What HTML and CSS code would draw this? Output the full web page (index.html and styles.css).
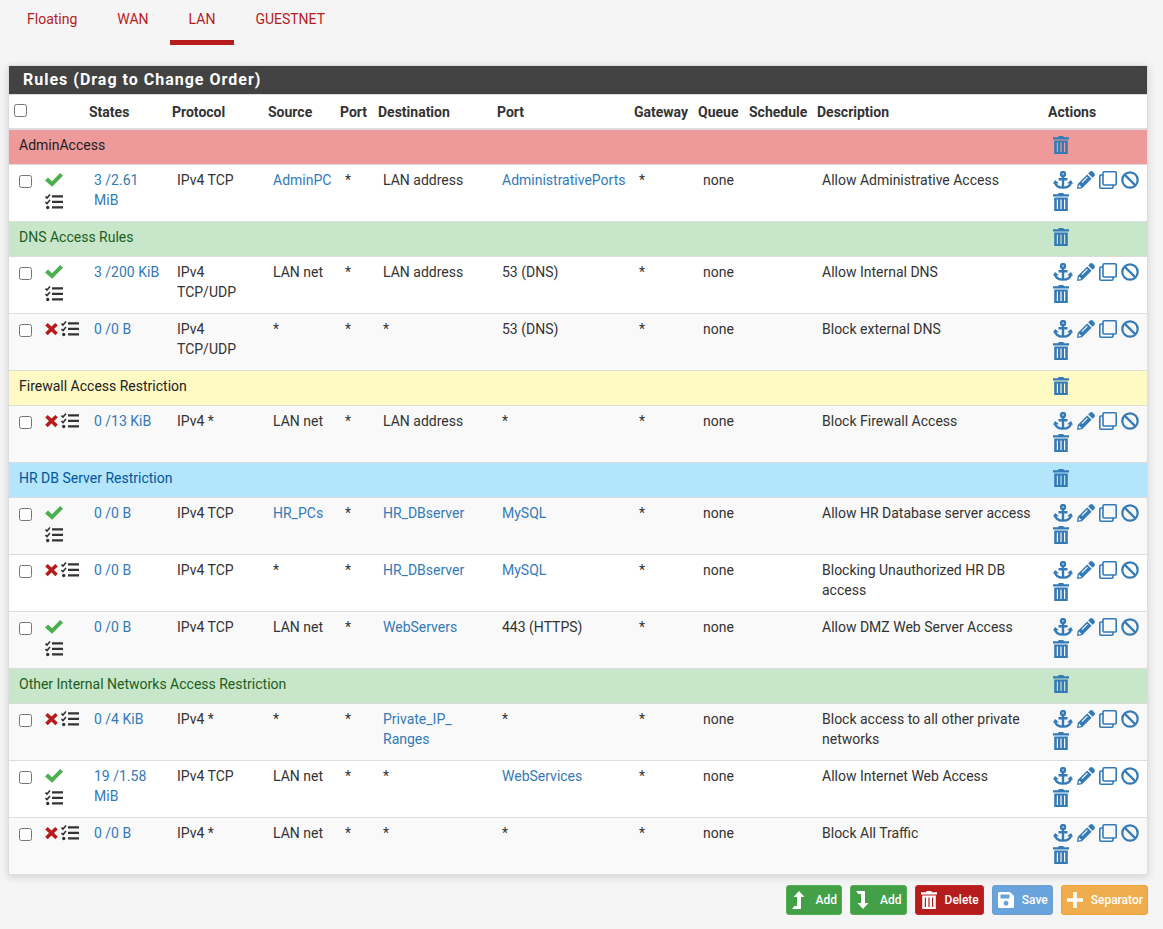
FILE: index.html
```html
<!DOCTYPE html>
<html lang="en">
<head>
  <meta charset="UTF-8">
  <title>Firewall Rules</title>
  <link rel="stylesheet" href="styles.css">
</head>
<body>
  <svg class="sprite" aria-hidden="true">
    <symbol id="check" viewBox="0 0 18 18"><path d="M0 9.500 3 6.600l4 3.700L15.200 2 18 4.800 7.100 15.800z"/></symbol>
    <symbol id="times" viewBox="0 0 14 18"><path d="M.2 5.400 2.700 2.900 6.500 6.600 10.300 2.900 12.800 5.400 9 9.100 12.800 12.800 10.300 15.300 6.500 11.600 2.700 15.300.2 12.800 4 9.100z"/></symbol>
    <symbol id="tasks" viewBox="0 0 18 18"><path d="M7 2.200h11v2.400H7zM7 7.700h11v2.400H7zM7 13.200h11v2.400H7z"/><path d="M.5 3.500 2 5l3-3.500M.5 9 2 10.500 5 7" fill="none" stroke="currentColor" stroke-width="1.600"/><circle cx="2.700" cy="14.500" r="1.700"/></symbol>
    <symbol id="anchor" viewBox="0 0 20 18"><g fill="none" stroke="currentColor" stroke-width="2.400"><circle cx="10" cy="3" r="2"/><path d="M10 5v11.500M5.500 8.300h9M2 10.800c.5 4 3.500 5.800 8 5.800s7.500-1.800 8-5.800"/></g><path d="M0 12.800 2 9l4 3.200zM20 12.800 18 9l-4 3.200z"/></symbol>
    <symbol id="pencil" viewBox="0 0 18 18"><path fill-rule="evenodd" d="m10.200 3.400 4.400 4.400L5 17.300l-5 .7.700-5zM2 13.500l-.5 3 3-.5zM4.500 11.300l.8.800 5.500-5.500-.8-.8zM11.200 2.400 13 .6c.8-.8 1.800-.8 2.600 0l1.800 1.800c.8.8.8 1.800 0 2.600l-1.800 1.800z"/></symbol>
    <symbol id="clone" viewBox="0 0 18 18"><g fill="none" stroke="currentColor" stroke-width="1.600"><rect x="4" y=".8" width="13.200" height="13.200" rx="1"/><path d="M4 4H1.800a1 1 0 0 0-1 1v11.200a1 1 0 0 0 1 1H13a1 1 0 0 0 1-1V14"/></g></symbol>
    <symbol id="ban" viewBox="0 0 18 18"><g fill="none" stroke="currentColor" stroke-width="2.200"><circle cx="9" cy="9" r="7.700"/><path d="m3.600 3.600 10.800 10.800"/></g></symbol>
    <symbol id="trash" viewBox="0 0 16 18"><path fill-rule="evenodd" d="M0 1.200h5L5.800 0h4.400l.8 1.200h5v2.200H0zM1.200 4.500h13.600V18H1.200zM3.800 6.500v9.500h1.200V6.500zM7.400 6.500v9.500h1.200V6.500zM11 6.500v9.500h1.200V6.500z"/></symbol>
    <symbol id="up" viewBox="-1 0 18 18"><path d="M0 18h9V6h3.500L7 0 1.500 6H5v9H2.400z"/></symbol>
    <symbol id="down" viewBox="-1 0 18 18"><path d="M0 0h9v12h3.500L7 18l-5.500-6H5V3H2.400z"/></symbol>
    <symbol id="save" viewBox="0 0 18 18"><path fill-rule="evenodd" d="M2.500 1H13l4 4v10.500a1.500 1.500 0 0 1-1.500 1.500h-13A1.500 1.500 0 0 1 1 15.500v-13A1.500 1.500 0 0 1 2.500 1zM3.500 3.500v4h9v-4zM9 9.800a2.400 2.400 0 1 0 .01 0z"/></symbol>
    <symbol id="plus" viewBox="0 0 18 18"><path d="M7.200 1h3.600v6.200H17v3.600h-6.200V17H7.200v-6.200H1V7.200h6.200z"/></symbol>
  </svg>

  <ul class="nav-pills">
    <li><a href="#">Floating</a></li>
    <li><a href="#">WAN</a></li>
    <li class="active"><a href="#">LAN</a></li>
    <li><a href="#">GUESTNET</a></li>
  </ul>

  <form>
    <div class="panel">
      <h2 class="panel-title">Rules (Drag to Change Order)</h2>
      <table id="ruletable">
        <colgroup>
          <col class="col-check"><col class="col-icons"><col class="col-states"><col class="col-proto"><col class="col-source"><col class="col-sport"><col class="col-dest"><col class="col-dport"><col class="col-gateway"><col class="col-queue"><col class="col-sched"><col><col class="col-actions">
        </colgroup>
        <thead>
          <tr>
            <th><input type="checkbox" aria-label="Select all"></th>
            <th></th>
            <th>States</th>
            <th>Protocol</th>
            <th>Source</th>
            <th>Port</th>
            <th>Destination</th>
            <th>Port</th>
            <th>Gateway</th>
            <th>Queue</th>
            <th>Schedule</th>
            <th>Description</th>
            <th>Actions</th>
          </tr>
        </thead>
        <tbody id="rules"></tbody>
      </table>
    </div>

    <nav class="action-buttons">
      <button type="button" class="btn btn-success"><svg class="icon"><use href="#up"/></svg>Add</button>
      <button type="button" class="btn btn-success"><svg class="icon"><use href="#down"/></svg>Add</button>
      <button type="button" class="btn btn-danger"><svg class="icon"><use href="#trash"/></svg>Delete</button>
      <button type="button" class="btn btn-primary"><svg class="icon"><use href="#save"/></svg>Save</button>
      <button type="button" class="btn btn-warning"><svg class="icon"><use href="#plus"/></svg>Separator</button>
    </nav>
  </form>

  <script src="rules.js"></script>
</body>
</html>
```
FILE: styles.css
```css
* {
    box-sizing: border-box;
}

body {
    margin: 0;
    padding: 0 15px 14px 8px;
    background-color: #f5f5f5;
    color: #333;
    font-family: Roboto, "Liberation Sans", sans-serif;
    font-size: 14px;
    line-height: 20px;
}

a {
    color: #337ab7;
    text-decoration: none;
}

.sprite {
    display: none;
}

.icon {
    display: block;
    width: 18px;
    height: 18px;
    fill: currentColor;
}

/* tabs */
.nav-pills {
    display: flex;
    gap: 2px;
    margin: 0 0 20px;
    padding: 0;
    list-style: none;
}

.nav-pills a {
    display: block;
    height: 45px;
    padding: 9px 19px;
    border-bottom: 5px solid transparent;
    color: #b71c1c;
}

.nav-pills .active a {
    border-bottom-color: #b71c1c;
}

/* rules panel */
.panel {
    border: 1px solid #ddd;
    background-color: #fff;
    box-shadow: 0 2px 8px rgba(0, 0, 0, 0.15);
}

.panel-title {
    margin: 0;
    padding: 4px 14px;
    background-color: #424242;
    color: #fff;
    font-size: 16px;
    font-weight: 700;
    letter-spacing: 1px;
}

table {
    width: 100%;
    table-layout: fixed;
    border-spacing: 0;
}

.col-check { width: 26px; }
.col-icons { width: 49px; }
.col-states { width: 83px; }
.col-proto { width: 96px; }
.col-source { width: 72px; }
.col-sport { width: 38px; }
.col-dest { width: 119px; }
.col-dport { width: 137px; }
.col-gateway { width: 64px; }
.col-queue { width: 51px; }
.col-sched { width: 68px; }
.col-actions { width: 104px; }

th {
    height: 36px;
    padding: 7px 5px 5px;
    border-top: 1px solid #ddd;
    border-bottom: 2px solid #ddd;
    font-weight: 700;
    text-align: left;
    vertical-align: top;
}

td {
    height: 57px;
    padding: 5px 5px 5px 10px;
    border-top: 1px solid #ddd;
    vertical-align: top;
}

tbody tr:nth-of-type(odd) {
    background-color: #f9f9f9;
}

.separator td {
    height: 35px;
}

tbody tr:first-child td {
    height: 34px;
    border-top: 0;
}

tbody .bg-danger td { background-color: #ef9a9a; color: #212121; }
tbody .bg-success td { background-color: #c8e6c9; color: #1b5e20; }
tbody .bg-warning td { background-color: #fff9c4; color: #212121; }
tbody .bg-info td { background-color: #b3e5fc; color: #01579b; }

input[type="checkbox"] {
    display: block;
    width: 13px;
    height: 13px;
    margin: 2px 0 0;
}

td input[type="checkbox"] {
    margin-top: 5px;
}

.status,
.actions {
    display: flex;
    flex-wrap: wrap;
    row-gap: 4px;
    padding-top: 1px;
}

.status {
    column-gap: 2px;
}

.actions {
    column-gap: 4px;
}

.actions a {
    display: block;
}

.icon-check { color: #4caf50; }
.icon-times { width: 14px; color: #b71c1c; }
.icon-anchor { width: 20px; }
.icon-trash { width: 16px; }

/* buttons */
.action-buttons {
    display: flex;
    flex-wrap: wrap;
    justify-content: flex-end;
    gap: 8px;
    margin-top: 10px;
}

.btn {
    display: flex;
    align-items: center;
    gap: 7px;
    height: 30px;
    padding: 0 4px;
    border: 1px solid;
    border-radius: 3px;
    color: #fff;
    font-family: inherit;
    font-size: 12px;
    font-weight: 500;
    cursor: pointer;
}

.btn-success { background-color: #43a047; border-color: #4caf50; }
.btn-danger { background-color: #b71c1c; border-color: #c62828; }
.btn-primary { background-color: #69a3db; border-color: #6c9fd0; }
.btn-warning { background-color: #f0ad4e; border-color: #eea236; }
```
FILE: rules.js
```js
// link cells are written as [text]
var rules = [
  { sep: 'AdminAccess', color: 'danger' },
  ['check', '3 /2.61 MiB', 'IPv4 TCP', '[AdminPC]', '*', 'LAN address', '[AdministrativePorts]', 'Allow Administrative Access'],
  { sep: 'DNS Access Rules', color: 'success' },
  ['check', '3 /200 KiB', 'IPv4 TCP/UDP', 'LAN net', '*', 'LAN address', '53 (DNS)', 'Allow Internal DNS'],
  ['times', '0 /0 B', 'IPv4 TCP/UDP', '*', '*', '*', '53 (DNS)', 'Block external DNS'],
  { sep: 'Firewall Access Restriction', color: 'warning' },
  ['times', '0 /13 KiB', 'IPv4 *', 'LAN net', '*', 'LAN address', '*', 'Block Firewall Access'],
  { sep: 'HR DB Server Restriction', color: 'info' },
  ['check', '0 /0 B', 'IPv4 TCP', '[HR_PCs]', '*', '[HR_DBserver]', '[MySQL]', 'Allow HR Database server access'],
  ['times', '0 /0 B', 'IPv4 TCP', '*', '*', '[HR_DBserver]', '[MySQL]', 'Blocking Unauthorized HR DB access'],
  ['check', '0 /0 B', 'IPv4 TCP', 'LAN net', '*', '[WebServers]', '443 (HTTPS)', 'Allow DMZ Web Server Access'],
  { sep: 'Other Internal Networks Access Restriction', color: 'success' },
  ['times', '0 /4 KiB', 'IPv4 *', '*', '*', '[Private_IP_<wbr>Ranges]', '*', 'Block access to all other private networks'],
  ['check', '19 /1.58 MiB', 'IPv4 TCP', 'LAN net', '*', '*', '[WebServices]', 'Allow Internet Web Access'],
  ['times', '0 /0 B', 'IPv4 *', 'LAN net', '*', '*', '*', 'Block All Traffic']
];

function icon(name) {
  return '<svg class="icon icon-' + name + '"><use href="#' + name + '"/></svg>';
}

function action(name, title) {
  return '<a href="#" title="' + title + '" aria-label="' + title + '">' + icon(name) + '</a>';
}

function cell(text) {
  if (text.charAt(0) == '[') {
    text = '<a href="#">' + text.slice(1, -1) + '</a>';
  }
  return '<td>' + text + '</td>';
}

var html = '';
rules.forEach(function (r) {
  if (r.sep) {
    html += '<tr class="separator bg-' + r.color + '"><td colspan="12">' + r.sep + '</td>' +
      '<td><div class="actions">' + action('trash', 'Delete separator') + '</div></td></tr>';
    return;
  }
  html += '<tr><td><input type="checkbox" aria-label="' + r[7] + '"></td>' +
    '<td><div class="status">' + icon(r[0]) + icon('tasks') + '</div></td>' +
    cell('[' + r[1] + ']') + cell(r[2]) + cell(r[3]) + cell(r[4]) + cell(r[5]) + cell(r[6]) +
    cell('*') + cell('none') + cell('') + cell(r[7]) +
    '<td><div class="actions">' + action('anchor', 'Move checked rules') + action('pencil', 'Edit') +
    action('clone', 'Copy') + action('ban', 'Disable') + action('trash', 'Delete') + '</div></td></tr>';
});
document.getElementById('rules').innerHTML = html;
```
